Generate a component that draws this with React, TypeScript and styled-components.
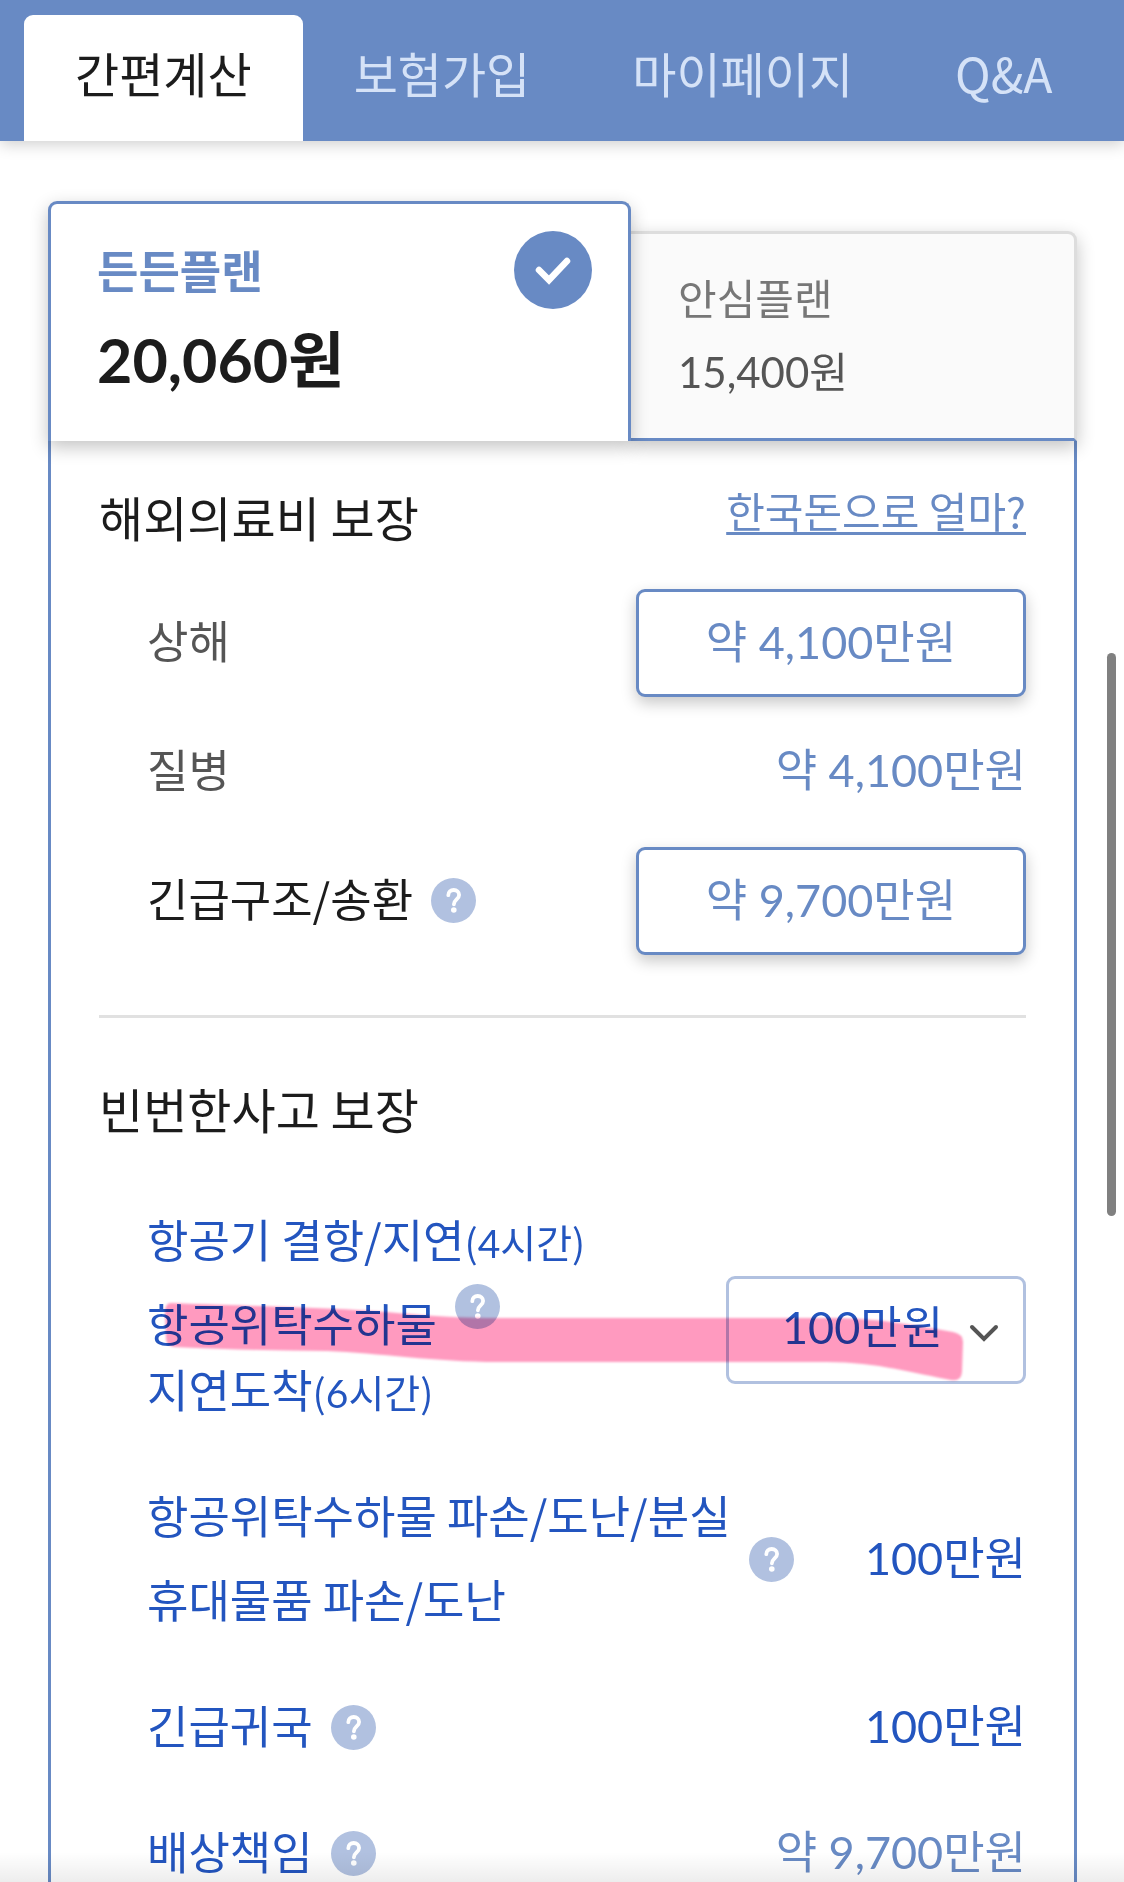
import { useState } from "react";
import type { ReactNode } from "react";
import styled, { createGlobalStyle } from "styled-components";

// 글로벌 스타일
const GlobalStyle = createGlobalStyle`
  * {
    box-sizing: border-box;
  }

  html, body {
    margin: 0;
    padding: 0;
    background-color: #ffffff;
    color: #1c1c1c;
    font-family: "Noto Sans CJK KR", sans-serif;
    font-weight: 400;
  }

  button, select {
    font-family: inherit;
    cursor: pointer;
  }

  h2 {
    margin: 0;
  }
`;

const TABS = ["간편계산", "보험가입", "마이페이지", "Q&A"];

const LIMITS = ["100만원", "50만원", "30만원"];

type Tone = "muted" | "dark" | "accent" | "soft";

const TONES: Record<Tone, string> = {
  muted: "#555555",
  dark: "#1c1c1c",
  accent: "#2355bf",
  soft: "#688ac4",
};

const HelpButton = ({ raised = false }: { raised?: boolean }) => (
  <Help type="button" aria-label="도움말" $raised={raised}>
    <svg width="45" height="45" viewBox="0 0 45 45" fill="none">
      <circle cx="22.5" cy="22.5" r="22.5" fill="#b1c1e0" />
      <path
        d="M17.3 17.2c0-3.2 2.3-5.2 5.4-5.2s5.4 1.9 5.4 4.9c0 4.3-5.2 4.7-5.2 9.4"
        stroke="#ffffff"
        strokeWidth="3.8"
        strokeLinecap="round"
      />
      <circle cx="22.8" cy="32" r="2.8" fill="#ffffff" />
    </svg>
  </Help>
);

const Hours = ({ count }: { count: number }) => (
  <Small>
    (<Digit>{count}</Digit>시간)
  </Small>
);

interface RowProps {
  label: ReactNode;
  value: ReactNode;
  tone: Tone;
  help?: boolean;
}

const CoverageRow = ({ label, value, tone, help }: RowProps) => (
  <Row>
    <Label $tone={tone}>
      <Lines>{label}</Lines>
      {help && <HelpButton />}
    </Label>
    {value}
  </Row>
);

const App = () => {
  const [limit, setLimit] = useState(LIMITS[0]);

  return (
    <>
      <GlobalStyle />
      <Screen>
        {/* 상단 탭 */}
        <TabBar>
          {TABS.map((tab, index) => (
            <Tab key={tab} href="#" $active={index === 0}>
              {tab}
            </Tab>
          ))}
        </TabBar>

        <Content>
          {/* 플랜 선택 */}
          <Plans>
            <SelectedPlan type="button" aria-pressed="true">
              <PlanText>
                <PlanName $selected>든든플랜</PlanName>
                <PlanPrice $selected>20,060원</PlanPrice>
              </PlanText>
              <svg width="78" height="78" viewBox="0 0 78 78" fill="none">
                <circle cx="39" cy="39" r="39" fill="#688ac4" />
                <path
                  d="M25 39l10 10L53 30"
                  stroke="#ffffff"
                  strokeWidth="6.5"
                  strokeLinecap="round"
                />
              </svg>
            </SelectedPlan>
            <OtherPlan type="button" aria-pressed="false">
              <PlanName>안심플랜</PlanName>
              <PlanPrice>15,400원</PlanPrice>
            </OtherPlan>
          </Plans>

          <Panel>
            {/* 해외의료비 */}
            <SectionHead>
              <SectionTitle>해외의료비 보장</SectionTitle>
              <ExchangeLink href="#">한국돈으로 얼마?</ExchangeLink>
            </SectionHead>
            <MedicalRows>
              <CoverageRow
                label="상해"
                tone="muted"
                value={<AmountButton type="button">약 4,100만원</AmountButton>}
              />
              <CoverageRow
                label="질병"
                tone="muted"
                value={<Amount $tone="soft">약 4,100만원</Amount>}
              />
              <CoverageRow
                label="긴급구조/송환"
                tone="dark"
                help
                value={<AmountButton type="button">약 9,700만원</AmountButton>}
              />
            </MedicalRows>

            <Divider />

            {/* 빈번한사고 */}
            <SectionTitle>빈번한사고 보장</SectionTitle>
            <AccidentRows>
              <Row>
                <Label $tone="accent">
                  <Lines>
                    <span>
                      항공기 결항/지연
                      <Hours count={4} />
                    </span>
                    <RaisedGroup>
                      <label htmlFor="baggage-limit">
                        항공위탁수하물
                        <br />
                        지연도착
                        <Hours count={6} />
                      </label>
                      <HelpButton raised />
                    </RaisedGroup>
                  </Lines>
                </Label>
                <SelectBox>
                  <LimitSelect
                    id="baggage-limit"
                    value={limit}
                    onChange={(e) => setLimit(e.target.value)}
                  >
                    {LIMITS.map((item) => (
                      <option key={item}>{item}</option>
                    ))}
                  </LimitSelect>
                  <Chevron width="30" height="18" viewBox="0 0 30 18" fill="none">
                    <path
                      d="M3 3l12 12L27 3"
                      stroke="#555555"
                      strokeWidth="4"
                      strokeLinecap="round"
                    />
                  </Chevron>
                </SelectBox>
                {/* 형광펜 표시 */}
                <Highlighter viewBox="0 -2 879 216" preserveAspectRatio="none">
                  <path
                    d="M24 95C100 98 160 99 210 102C260 105 290 110 350 110L680 110C730 110 760 116 806 124Q816 126 816 134L815 164Q814 174 804 172C770 166 730 154 680 154L350 154C290 154 230 145 180 143C130 142 80 142 27 139Q19 138 19 130L18 104Q18 95 24 95Z"
                    fill="#ff9abf"
                  />
                </Highlighter>
              </Row>
              <CoverageRow
                label={
                  <>
                    <span>항공위탁수하물 파손/도난/분실</span>
                    <span>휴대물품 파손/도난</span>
                  </>
                }
                tone="accent"
                help
                value={<Amount $tone="accent">100만원</Amount>}
              />
              <CoverageRow
                label="긴급귀국"
                tone="accent"
                help
                value={<Amount $tone="accent">100만원</Amount>}
              />
              <CoverageRow
                label="배상책임"
                tone="accent"
                help
                value={<Amount $tone="soft">약 9,700만원</Amount>}
              />
            </AccidentRows>
          </Panel>
        </Content>

        <ScrollThumb />
        <BottomShade />
      </Screen>
    </>
  );
};

export default App;

// Styled Components
const numberFont = `Lato, "Noto Sans CJK KR", sans-serif`;

const Screen = styled.div`
  position: relative;
  height: 100vh;
  overflow: hidden;
`;

const TabBar = styled.nav`
  height: 141px;
  padding: 15px 24px 0;
  display: flex;
  background: #688ac4;
  box-shadow: 0 3px 15px rgba(0, 0, 0, 0.2);
`;

const Tab = styled.a<{ $active: boolean }>`
  padding: 0 51px;
  border-radius: 9px 9px 0 0;
  font-size: 48px;
  line-height: 114px;
  white-space: nowrap;
  text-decoration: none;
  color: ${(props) => (props.$active ? "#1c1c1c" : "#d5e2f7")};
  background: ${(props) => (props.$active ? "#ffffff" : "transparent")};
`;

const Content = styled.main`
  padding: 60px 47px 0 48px;
`;

const Plans = styled.div`
  display: grid;
  grid-template-columns: 583fr 446fr;
  align-items: end;
`;

const PlanButton = styled.button`
  color: inherit;
  text-align: left;
  box-shadow: 0 6px 18px rgba(0, 0, 0, 0.24);
`;

const SelectedPlan = styled(PlanButton)`
  position: relative;
  height: 240px;
  padding: 27px 36px 0 46px;
  display: flex;
  justify-content: space-between;
  align-items: flex-start;
  border: 3px solid #688ac4;
  border-bottom: none;
  border-radius: 9px 9px 0 0;
  background: #ffffff;
`;

const OtherPlan = styled(PlanButton)`
  height: 210px;
  padding: 30px 47px 0;
  display: flex;
  flex-direction: column;
  border: 3px solid #dddddd;
  border-left: none;
  border-bottom-color: #688ac4;
  border-radius: 0 9px 0 0;
  background: #fafafa;
`;

const PlanText = styled.span`
  display: flex;
  flex-direction: column;
  gap: 12px;
`;

const PlanName = styled.span<{ $selected?: boolean }>`
  font-size: ${(props) => (props.$selected ? "45px" : "42px")};
  font-weight: ${(props) => (props.$selected ? 700 : 400)};
  line-height: ${(props) => (props.$selected ? "78px" : "66px")};
  color: ${(props) => (props.$selected ? "#688ac4" : "#777777")};
`;

const PlanPrice = styled.span<{ $selected?: boolean }>`
  font-family: ${numberFont};
  font-size: ${(props) => (props.$selected ? "61px" : "42px")};
  font-weight: ${(props) => (props.$selected ? 700 : 400)};
  line-height: ${(props) => (props.$selected ? "78px" : "84px")};
  color: ${(props) => (props.$selected ? "#1c1c1c" : "#555555")};
`;

const Panel = styled.section`
  padding: 42px 48px 60px;
  border: 3px solid #688ac4;
  border-top: none;
`;

const SectionHead = styled.div`
  display: flex;
  justify-content: space-between;
`;

const SectionTitle = styled.h2`
  font-size: 48px;
  font-weight: 400;
  line-height: 66px;
`;

const ExchangeLink = styled.a`
  font-size: 42px;
  line-height: 54px;
  color: #688ac4;
  text-decoration: underline;
  text-decoration-thickness: 3px;
  text-underline-offset: 4px;
`;

const MedicalRows = styled.div`
  margin-top: 40px;
  padding-left: 48px;
  display: grid;
  grid-auto-rows: 108px;
  gap: 21px;
`;

const AccidentRows = styled.div`
  margin-top: 65px;
  padding-left: 48px;
  display: flex;
  flex-direction: column;
  gap: 54px;
`;

const Row = styled.div`
  position: relative;
  display: flex;
  justify-content: space-between;
  align-items: center;
`;

const Label = styled.div<{ $tone: Tone }>`
  padding-bottom: 6px;
  display: flex;
  align-items: center;
  gap: 18px;
  font-size: 45px;
  line-height: 66px;
  white-space: nowrap;
  color: ${(props) => TONES[props.$tone]};
`;

const Lines = styled.div`
  display: flex;
  flex-direction: column;
  gap: 18px;
`;

const RaisedGroup = styled.div`
  display: grid;
  grid-template-columns: 290px auto;
  justify-content: start;
  gap: 18px;
`;

const Small = styled.small`
  font-size: 39px;
  line-height: 1;
`;

const Digit = styled.span`
  font-family: ${numberFont};
`;

const Help = styled.button<{ $raised: boolean }>`
  width: 45px;
  height: 45px;
  margin-top: ${(props) => (props.$raised ? "-6px" : "4px")};
  padding: 0;
  border: none;
  background: none;
  flex-shrink: 0;

  svg {
    display: block;
  }
`;

const Amount = styled.span<{ $tone: Tone }>`
  padding-bottom: 4px;
  font-family: ${numberFont};
  font-size: 45px;
  line-height: 66px;
  white-space: nowrap;
  color: ${(props) => TONES[props.$tone]};
`;

const AmountButton = styled.button`
  width: 390px;
  height: 108px;
  padding: 0 0 8px;
  border: 3px solid #688ac4;
  border-radius: 9px;
  background: #ffffff;
  box-shadow: 0 6px 15px rgba(0, 0, 0, 0.22);
  color: #688ac4;

  && {
    font-family: ${numberFont};
    font-size: 45px;
  }
`;

const Divider = styled.hr`
  height: 3px;
  margin: 60px 0 57px;
  border: none;
  background: #e1e1e1;
`;

const SelectBox = styled.div`
  position: relative;
  align-self: flex-end;
  width: 300px;
  margin-bottom: 44px;
`;

const LimitSelect = styled.select`
  appearance: none;
  display: block;
  width: 100%;
  height: 108px;
  padding: 0 78px 6px 53px;
  border: 3px solid #b1c1e0;
  border-radius: 9px;
  background: #ffffff;
  color: #2355bf;

  && {
    font-family: ${numberFont};
    font-size: 45px;
  }
`;

const Chevron = styled.svg`
  position: absolute;
  top: 48px;
  right: 27px;
  pointer-events: none;
`;

const Highlighter = styled.svg`
  position: absolute;
  top: 0;
  left: 0;
  width: 100%;
  height: 216px;
  filter: blur(1px);
  mix-blend-mode: multiply;
  pointer-events: none;
`;

const ScrollThumb = styled.div`
  position: absolute;
  top: 653px;
  right: 8px;
  width: 9px;
  height: 563px;
  border-radius: 5px;
  background: #808080;
`;

const BottomShade = styled.div`
  position: absolute;
  left: 0;
  right: 0;
  bottom: 0;
  height: 30px;
  background: linear-gradient(rgba(0, 0, 0, 0), rgba(0, 0, 0, 0.07));
  pointer-events: none;
`;
